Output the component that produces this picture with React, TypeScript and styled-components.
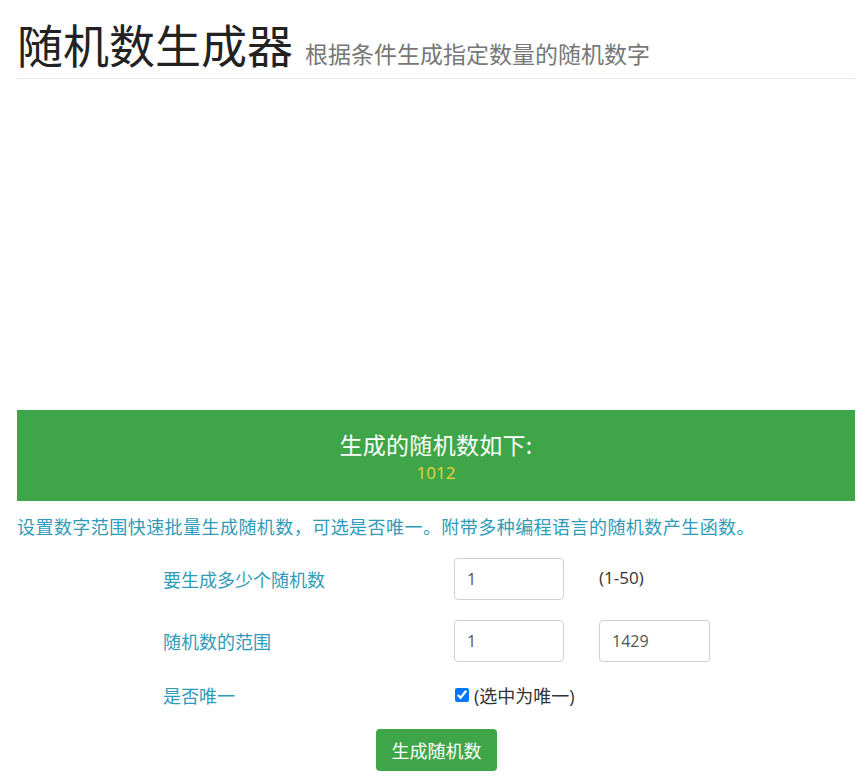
import React, {useState} from 'react';
import styled, {createGlobalStyle} from "styled-components";

const GlobalStyle = createGlobalStyle`
    body {
        margin: 0;
        background: #fff;
        font-family: "Open Sans", "Noto Sans CJK SC", sans-serif;
        color: #333;
    }
`;

const Page = styled.div`
    padding: 0 10px 0 17px;
`;

const Header = styled.div`
    display: flex;
    align-items: baseline;
    gap: 12px;
    padding-top: 18px;
    padding-bottom: 8px;
    border-bottom: 1px solid #e6e6e6;
`;

const Title = styled.h1`
    margin: 0;
    font-family: "Noto Sans CJK SC", sans-serif;
    font-weight: 400;
    font-size: 46px;
    line-height: 50px;
    color: #222;
`;

const SubTitle = styled.small`
    font-family: "Noto Sans CJK SC", sans-serif;
    font-size: 23px;
    color: #777;
`;

const AdSpace = styled.div`
    height: 331px;
`;

const ResultBox = styled.div`
    box-sizing: border-box;
    background: #3ea648;
    height: 91px;
    padding-bottom: 1px;
    display: flex;
    flex-direction: column;
    align-items: center;
    justify-content: center;
`;

const ResultTitle = styled.div`
    font-family: "Noto Sans CJK SC", sans-serif;
    font-size: 23px;
    line-height: 34px;
    letter-spacing: 0.3px;
    color: #fff;
`;

const ResultValue = styled.div`
    font-size: 17px;
    line-height: 23px;
    color: #ecd03a;
`;

const Intro = styled.p`
    margin: 13px 0 20px;
    font-family: "Noto Sans CJK SC", sans-serif;
    font-size: 18px;
    letter-spacing: 0.45px;
    line-height: 24px;
    color: #2f9bb9;
`;

const Form = styled.div`
    display: grid;
    grid-template-columns: 291px 145px auto;
    row-gap: 20px;
    align-items: center;
    padding-left: 146px;
`;

const Label = styled.div`
    font-family: "Noto Sans CJK SC", sans-serif;
    font-size: 18px;
    color: #2f9bb9;
`;

const Input = styled.input<{ $width?: number }>`
    box-sizing: border-box;
    width: ${p => p.$width ?? 110}px;
    height: 42px;
    padding: 0 12px;
    border: 1px solid #d0d0d0;
    border-radius: 4px;
    font-family: "Open Sans", sans-serif;
    font-size: 16px;
    color: #555;
    outline: none;
`;

const Hint = styled.div`
    align-self: start;
    padding-top: 8px;
    font-size: 17px;
    color: #333;
`;

const CheckLabel = styled.label`
    grid-column: 2 / 4;
    display: flex;
    align-items: center;
    gap: 5px;
    font-family: "Open Sans", "Noto Sans CJK SC", sans-serif;
    font-size: 18px;
    color: #333;

    input {
        margin: 0 0 0 1px;
        width: 14px;
        height: 14px;
    }
`;

const Actions = styled.div`
    display: flex;
    justify-content: center;
    margin-top: 21px;
`;

const Button = styled.button`
    height: 42px;
    padding: 0 15px 0 16px;
    border: none;
    border-radius: 4px;
    background: #3ea648;
    color: #fff;
    font-family: "Noto Sans CJK SC", sans-serif;
    font-size: 18px;
    cursor: pointer;
`;

const App: React.FC = () => {
    const [unique, setUnique] = useState(true);

    return (
        <Page>
            <GlobalStyle/>
            <Header>
                <Title>随机数生成器</Title>
                <SubTitle>根据条件生成指定数量的随机数字</SubTitle>
            </Header>
            <AdSpace/>
            <ResultBox>
                <ResultTitle>生成的随机数如下:</ResultTitle>
                <ResultValue>1012</ResultValue>
            </ResultBox>
            <Intro>设置数字范围快速批量生成随机数，可选是否唯一。附带多种编程语言的随机数产生函数。</Intro>
            <Form>
                <Label>要生成多少个随机数</Label>
                <Input defaultValue="1"/>
                <Hint>(1-50)</Hint>

                <Label>随机数的范围</Label>
                <Input defaultValue="1"/>
                <Input defaultValue="1429" $width={111}/>

                <Label>是否唯一</Label>
                <CheckLabel>
                    <input type="checkbox" checked={unique} onChange={e => setUnique(e.target.checked)}/>
                    (选中为唯一)
                </CheckLabel>
            </Form>
            <Actions>
                <Button>生成随机数</Button>
            </Actions>
        </Page>
    );
};

export default App;
